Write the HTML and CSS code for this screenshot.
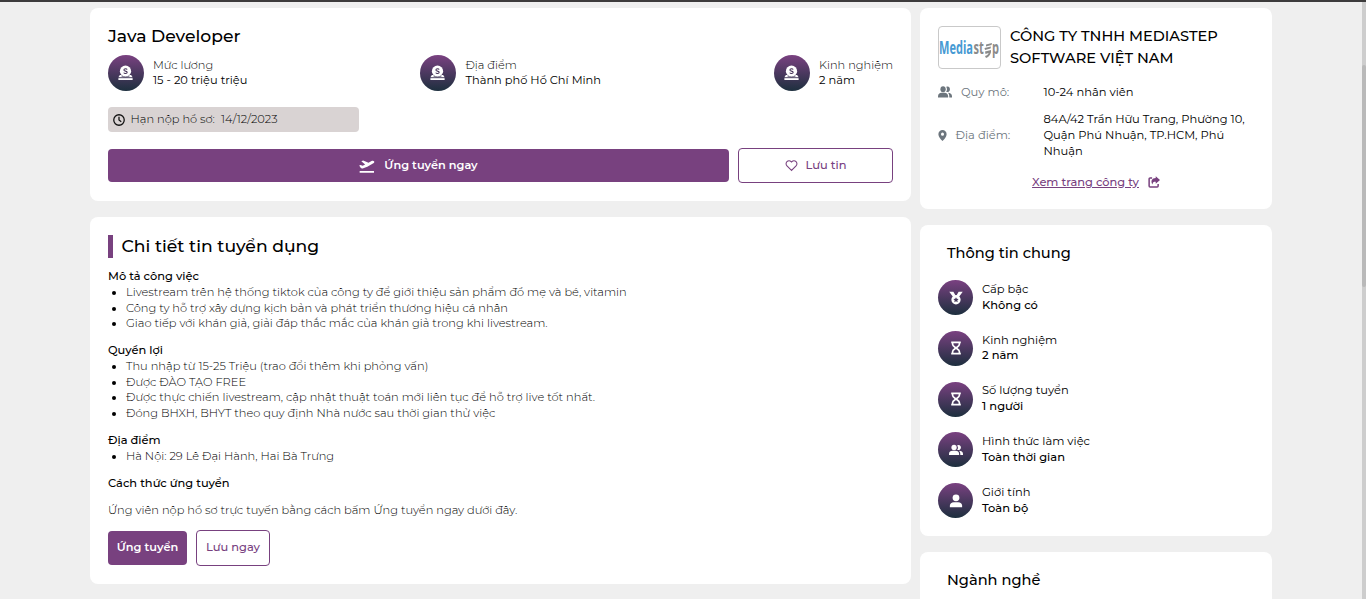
FILE: index.html
```html
<!DOCTYPE html>
<html lang="vi">
<head>
<meta charset="utf-8">
<title>Java Developer</title>
<link rel="stylesheet" href="styles.css">
</head>
<body>
<svg class="defs" width="0" height="0">
  <symbol id="coin" viewBox="0 0 16 16"><circle cx="8" cy="6" r="6"/><path d="M2 10h2.200l1 1.500h5.600l1-1.500H14l1.600 2.600H.4z"/><path d="M.4 13.500h15.200v2H.4z"/><path d="M3.500 11.100c2.600 1.500 6.400 1.500 9 0" fill="none" stroke="#372f50" stroke-width=".7"/><path d="M9.800 4.300C9.500 3.700 8.900 3.500 8 3.500c-1 0-1.700.4-1.700 1.200 0 1.900 3.500.7 3.500 2.600 0 .9-.8 1.300-1.800 1.300S6.400 8.200 6.200 7.500" fill="none" stroke="#443156" stroke-width="1.150"/></symbol>
  <symbol id="medal" viewBox="0 0 16 16"><path d="M.3.800h4.700l2.300 4L4.500 6.700zM15.700.8H11l-2.300 4 2.800 1.900z"/><path fill-rule="evenodd" d="M8 4.700a5.300 5.300 0 1 0 0 10.600A5.300 5.300 0 0 0 8 4.700zm0 2.300.9 1.900 2.100.3-1.500 1.500.4 2.100L8 11.800l-1.900 1 .4-2.100L5 9.200l2.100-.3z"/></symbol>
  <symbol id="hourglass" viewBox="0 0 16 16"><path d="M2.500 1.500h11M2.500 14.500h11M4.100 2v1.800C4.100 6 7 7 8 8c1-1 3.900-2 3.900-4.200V2M4.100 14v-1.800C4.100 10 7 9 8 8c1 1 3.900 2 3.900 4.200V14" fill="none" stroke="currentColor" stroke-width="1.900"/></symbol>
  <symbol id="people" viewBox="0 0 18 16"><circle cx="6.500" cy="4.800" r="3.400"/><path d="M0 14.500v-1.500c0-2.600 2-4 4.500-4h4c2.500 0 4.500 1.400 4.500 4v1.500z"/><path d="M10.500 1.900a3.300 3.300 0 1 1 0 5.800 5 5 0 0 0 0-5.800zM12.800 9c3 0 5.200 1.500 5.200 4v1.500h-3.500V13c0-1.700-.6-3-1.700-4z"/></symbol>
  <symbol id="person" viewBox="0 0 16 16"><circle cx="8" cy="4.400" r="3.900"/><path d="M1 15v-1.500c0-2.600 2-4 4.500-4h5c2.500 0 4.500 1.400 4.500 4V15z"/></symbol>
</svg>
<div class="topline"></div>
<main class="page">
  <div class="col-main">
    <section class="card summary">
      <h1 class="job-title">Java Developer</h1>
      <div class="facts">
        <div class="fact"><span class="disc"><svg><use href="#coin"/></svg></span><div><p class="label">Mức lương</p><p class="value">15 - 20 triệu triệu</p></div></div>
        <div class="fact"><span class="disc"><svg><use href="#coin"/></svg></span><div><p class="label">Địa điểm</p><p class="value">Thành phố Hồ Chí Minh</p></div></div>
        <div class="fact"><span class="disc"><svg><use href="#coin"/></svg></span><div><p class="label">Kinh nghiệm</p><p class="value">2 năm</p></div></div>
      </div>
      <div class="deadline"><svg viewBox="0 0 16 16"><circle cx="8" cy="8" r="7"/><path d="M8 3.500V8l3 2.200"/></svg><span class="dl-label">Hạn nộp hồ sơ:</span><span class="dl-date">14/12/2023</span></div>
      <div class="actions">
        <a class="btn primary wide"><svg viewBox="0 0 24 24"><path d="M1 19.500h21.500v2.500H1zM22.800 5.200c.5 1-.2 2-1.300 2.700L17 10.500l-4.500 2.600-7 2.600c-1.300.4-2.200 0-3-.9L.3 11.400l2-.9 3.200 1.200 3.700-2.100L3.500 4.800l2.700-1 8.100 3.300 4.400-2.500c1.600-.8 3.400-.6 4.100.6z"/></svg><span>Ứng tuyển ngay</span></a>
        <a class="btn outline save"><svg viewBox="0 0 24 24"><path d="M12 21 3.600 12.500a5.500 5.500 0 0 1 0-7.800 5.400 5.400 0 0 1 7.700 0l.7.800.7-.8a5.400 5.400 0 0 1 7.700 0 5.500 5.500 0 0 1 0 7.800z"/></svg><span>Lưu tin</span></a>
      </div>
    </section>
    <section class="card details">
      <h2 class="details-title"><span>Chi tiết tin tuyển dụng</span></h2>
      <h3>Mô tả công việc</h3>
      <ul>
        <li><span>Livestream trên hệ thống tiktok của công ty để giới thiệu sản phẩm đồ mẹ và bé, vitamin</span></li>
        <li><span>Công ty hỗ trợ xây dựng kịch bản và phát triển thương hiệu cá nhân</span></li>
        <li><span>Giao tiếp với khán giả, giải đáp thắc mắc của khán giả trong khi livestream.</span></li>
      </ul>
      <h3>Quyền lợi</h3>
      <ul>
        <li><span>Thu nhập từ 15-25 Triệu (trao đổi thêm khi phỏng vấn)</span></li>
        <li><span>Được ĐÀO TẠO FREE</span></li>
        <li><span>Được thực chiến livestream, cập nhật thuật toán mới liên tục để hỗ trợ live tốt nhất.</span></li>
        <li><span>Đóng BHXH, BHYT theo quy định Nhà nước sau thời gian thử việc</span></li>
      </ul>
      <h3>Địa điểm</h3>
      <ul><li><span>Hà Nội: 29 Lê Đại Hành, Hai Bà Trưng</span></li></ul>
      <h3>Cách thức ứng tuyển</h3>
      <p class="note">Ứng viên nộp hồ sơ trực tuyến bằng cách bấm Ứng tuyển ngay dưới đây.</p>
      <div class="small-actions"><a class="btn primary">Ứng tuyển</a><a class="btn outline">Lưu ngay</a></div>
    </section>
  </div>
  <aside class="col-side">
    <section class="card company">
      <div class="company-head">
        <svg class="logo" viewBox="0 0 61 41"><g transform="scale(.65 1)"><text class="logo-blue" x="0" y="27.500">Media</text><text class="logo-gray" x="53" y="27.500">st</text><text class="logo-gray" x="81.500" y="27.500">p</text></g><path class="logo-gray" d="M47 17.500l6-1.500-.5 2-5.500 1.500zM45.500 21l6.500-1.500-.5 2-5.500 1.400zM46 24.500l6-1.500c.5 3-1.500 7-5 8l-1-2c2-.4 3.500-1.700 3.500-3L46.500 27z"/></svg>
        <h2>CÔNG TY TNHH MEDIASTEP<br>SOFTWARE VIỆT NAM</h2>
      </div>
      <div class="info size"><svg class="i-people" viewBox="0 1 18 14" preserveAspectRatio="none"><use href="#people" width="18" height="16"/></svg><span class="key">Quy mô:</span><span class="val">10-24 nhân viên</span></div>
      <div class="info place"><svg class="i-pin" viewBox="0 0 12 16"><path fill-rule="evenodd" d="M6 0a6 6 0 0 0-6 6c0 3 3 7 6 10 3-3 6-7 6-10a6 6 0 0 0-6-6zm0 3.800a2.200 2.200 0 1 1 0 4.400 2.200 2.200 0 0 1 0-4.400z"/></svg><span class="key">Địa điểm:</span><span class="val">84A/42 Trần Hữu Trang, Phường 10,<br>Quận Phú Nhuận, TP.HCM, Phú<br>Nhuận</span></div>
      <a class="link"><span>Xem trang công ty</span><svg viewBox="0 0 16 16"><path d="M5.500 2.500H2.800c-.7 0-1.300.6-1.300 1.300v9.400c0 .7.600 1.300 1.300 1.300h9.400c.7 0 1.300-.6 1.300-1.300v-2.500" fill="none" stroke="currentColor" stroke-width="2"/><path d="M10.300.2 16 5.200l-5.700 5V7.600c-2.700-.1-4 .5-4.300 3.700C3 7 5.300 2.800 10.300 2.800z"/></svg></a>
    </section>
    <section class="card general">
      <h2 class="side-title">Thông tin chung</h2>
      <div class="rows">
        <div class="row"><span class="disc"><svg><use href="#medal"/></svg></span><div><p class="label">Cấp bậc</p><p class="value">Không có</p></div></div>
        <div class="row"><span class="disc"><svg><use href="#hourglass"/></svg></span><div><p class="label">Kinh nghiệm</p><p class="value">2 năm</p></div></div>
        <div class="row"><span class="disc"><svg><use href="#hourglass"/></svg></span><div><p class="label">Số lượng tuyển</p><p class="value">1 người</p></div></div>
        <div class="row"><span class="disc"><svg><use href="#people"/></svg></span><div><p class="label">Hình thức làm việc</p><p class="value">Toàn thời gian</p></div></div>
        <div class="row"><span class="disc"><svg><use href="#person"/></svg></span><div><p class="label">Giới tính</p><p class="value">Toàn bộ</p></div></div>
      </div>
    </section>
    <section class="card career"><h2 class="side-title">Ngành nghề</h2></section>
  </aside>
</main>
<div class="scrollbar"><div class="thumb"></div></div>
</body>
</html>
```

FILE: styles.css
```css
* { box-sizing: border-box; margin: 0; padding: 0; }
body { height: 599px; overflow: hidden; background: #efefef; color: #000; font: 400 11.41px/15.75px Montserrat, Inter, "Open Sans", sans-serif; }
svg { fill: currentColor; display: block; flex: none; }
.defs { position: absolute; }
.topline { height: 2px; background: #3d3b3c; }
.page { display: grid; grid-template-columns: 821px 352px; column-gap: 9px; padding: 6px 0 0 90px; align-items: start; }
.col-main, .col-side { display: flex; flex-direction: column; gap: 16px; }
.card { background: #fff; border-radius: 8px; padding: 18px; white-space: nowrap; }
.disc { width: 36px; height: 36px; border-radius: 50%; background: linear-gradient(#7a4181, #1d2f3e); color: #fff; display: flex; align-items: center; justify-content: center; flex: none; }
.disc svg { width: 16px; height: 16px; padding-right: 1px; }

.summary { height: 193px; }
.job-title { font-size: 17.2px; font-weight: 500; line-height: 20px; }
.facts { display: flex; justify-content: space-between; margin-top: 9px; }
.fact { display: flex; align-items: center; gap: 9px; line-height: 15px; }
.fact .label { font-size: 11.35px; font-weight: 300; }
.fact .value { font-size: 11.42px; }
.deadline { display: flex; align-items: center; width: 251px; height: 25px; margin-top: 16px; padding-left: 5px; border-radius: 4px; background: #d9d3d3; font-weight: 300; }
.deadline svg { width: 12px; height: 12px; margin-right: 5.5px; fill: none; stroke: #111; stroke-width: 1.7; }
.dl-label { margin-right: 6px; }
.actions { display: flex; align-items: center; gap: 9px; margin-top: 16px; }
.btn { display: flex; align-items: center; justify-content: center; border-radius: 4px; }
.primary { background: #78417f; color: #fff; font-size: 11.3px; font-weight: 600; height: 33px; }
.outline { border: 1px solid #78417f; color: #78417f; font-weight: 500; height: 35px; }
.wide { width: 621px; }
.wide svg { width: 16px; height: 16px; margin-right: 9px; }
.save { width: 155px; }
.save svg { width: 13px; height: 13px; margin-right: 8px; fill: none; stroke: currentColor; stroke-width: 2; }

.details { height: 367px; }
.details-title { border-left: 5px solid #78417f; height: 23px; padding-left: 8.5px; font-size: 17.2px; font-weight: 500; line-height: 22px; margin-bottom: 11px; }
.details h3 { font-size: 11.41px; font-weight: 500; }
.details ul { padding-left: 18px; margin-bottom: 11.2px; }
.details li span { font-weight: 300; }
.note { margin-top: 11.5px; font-weight: 300; }
.small-actions { display: flex; align-items: center; gap: 9px; margin-top: 11.5px; }
.small-actions .primary { width: 79px; height: 34px; }
.small-actions .outline { width: 74px; height: 36px; }

.company { height: 201px; }
.company-head { display: flex; gap: 9px; align-items: flex-start; }
.logo { width: 63px; height: 43px; border: 1px solid #c9c9c9; border-radius: 4px; }
.logo text { font: 700 17px "Open Sans", sans-serif; }
.logo-blue { fill: #479ad3; }
.logo-gray { fill: #8b8b8b; }
.company h2 { font-size: 14.6px; font-weight: 500; line-height: 22px; margin-top: -1px; }
.info { display: grid; align-items: center; line-height: 16px; font-size: 11.47px; }
.info svg { color: #6c757d; }
.key { color: #6c757d; font-weight: 400; }
.size { grid-template-columns: 23px 82.5px 1fr; margin-top: 15px; }
.place { grid-template-columns: 17.5px 88px 1fr; margin-top: 11px; }
.i-people { width: 14px; height: 12px; }
.i-pin { width: 9px; height: 11px; }
.link { display: flex; justify-content: center; gap: 9px; margin-top: 15px; line-height: 16px; font-weight: 500; color: #78417f; }
.link span { text-decoration: underline; text-underline-offset: 1px; }
.link svg { width: 12px; height: 12px; margin-top: 2px; }

.side-title { font-size: 14.6px; font-weight: 500; line-height: 20px; padding-left: 9px; }
.general { height: 311px; }
.rows { display: flex; flex-direction: column; gap: 15.78px; margin-top: 17.2px; }
.row { display: flex; align-items: center; gap: 9px; height: 35px; font-size: 11.48px; }
.row .disc { width: 35px; height: 35px; }
.row .disc svg { width: 14px; height: 14px; padding: 0; }
.row .value { font-weight: 500; }
.career { height: 60px; }

.scrollbar { position: absolute; right: 0; top: 2px; width: 4px; height: 597px; background: #cdcdcd; }
.thumb { height: 222px; margin-top: 63px; background: #b9b9b9; border-radius: 2px; }
```
